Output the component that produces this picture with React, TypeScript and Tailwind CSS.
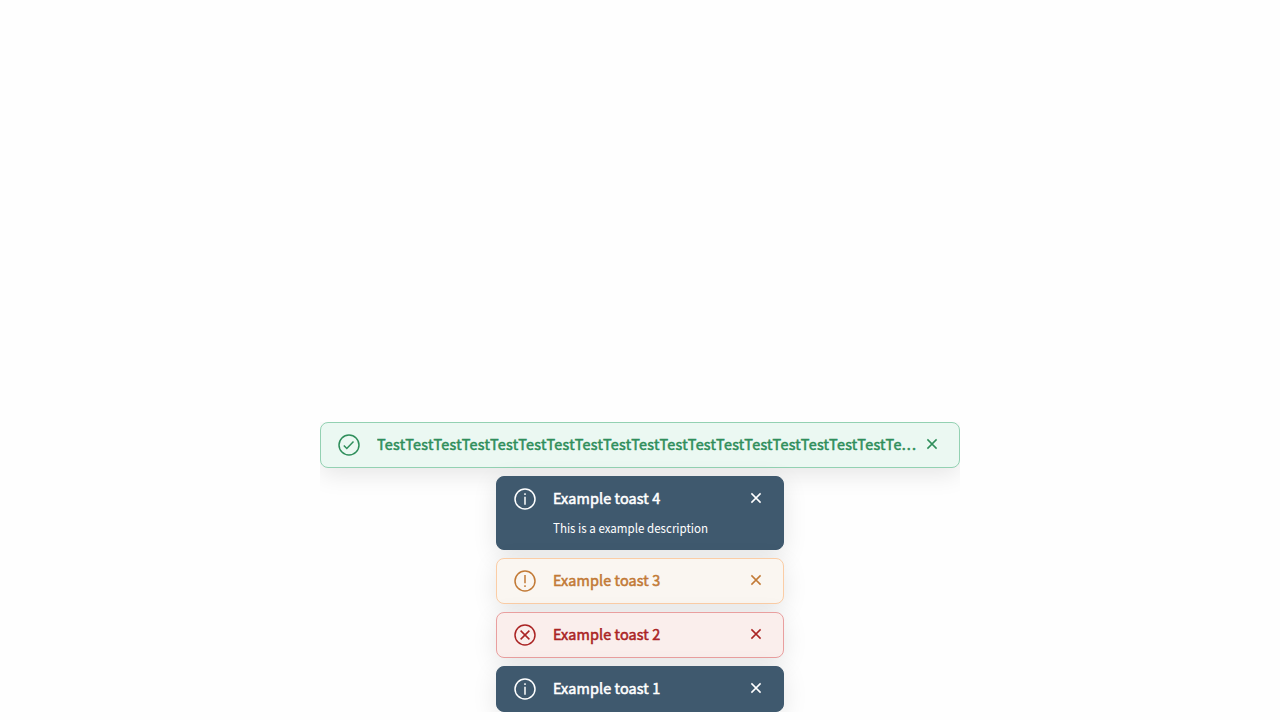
import type { ReactNode } from "react";

type Kind = "success" | "info" | "warning" | "error";

const tones: Record<Kind, string> = {
  success: "bg-[#ebf8f2] border-[#93d1b2] text-[#2f8e5b]",
  info: "bg-[#3f596e] border-[#3f596e] text-white",
  warning: "bg-[#faf6f1] border-[#fbcda6] text-[#c27a36]",
  error: "bg-[#faeeec] border-[#e99f9f] text-[#aa2424]",
};

const glyphs: Record<Kind, ReactNode> = {
  success: <path d="M6.8 12.5l3 3 6.7-6.9" />,
  info: (
    <>
      <path d="M12 9.8v8" />
      <path d="M12 6.3v1.7" />
    </>
  ),
  warning: (
    <>
      <path d="M12 6v8.2" />
      <path d="M12 16.2v1.7" />
    </>
  ),
  error: <path d="M7.6 7.6l8.8 8.8M16.4 7.6l-8.8 8.8" />,
};

type ToastProps = { kind: Kind; title: ReactNode; description?: string; wide?: boolean };

function Toast({ kind, title, description, wide }: ToastProps) {
  return (
    <div
      className={`${tones[kind]} ${wide ? "w-full" : "w-72"} flex shrink-0 items-start rounded-lg border pt-[10px] pb-[10px] pl-4 pr-[19px] shadow-[0_6px_24px_rgba(0,0,0,0.1)]`}
    >
      <svg className="size-6 shrink-0" viewBox="0 0 24 24" fill="none" stroke="currentColor" strokeWidth="1.5">
        <circle cx="12" cy="12" r="10" />
        {glyphs[kind]}
      </svg>
      <div className="ml-4 min-w-0 flex-1">
        <div
          className={`${wide ? "tracking-[0.275px]" : "tracking-[0.12px]"} h-6 overflow-hidden text-[14.4px] leading-[22px] font-normal whitespace-nowrap [-webkit-text-stroke:0.55px_currentColor]`}
        >
          {title}
        </div>
        {description && (
          <div className="mt-[7px] mb-px origin-left scale-x-[0.918] text-[12.6px] leading-5 whitespace-nowrap">
            {description}
          </div>
        )}
      </div>
      <svg className="mt-[3px] ml-[6px] size-4 shrink-0" viewBox="0 0 16 16" fill="none" stroke="currentColor" strokeWidth="1.5">
        <path d="M3.4 3.4l9.2 9.2M12.6 3.4l-9.2 9.2" />
      </svg>
    </div>
  );
}

export default function App() {
  return (
    <main className="flex h-[720px] flex-col items-center justify-end bg-[#fefefe] pb-2 font-['Source_Sans_Pro','Noto_Sans_CJK_SC',sans-serif]">
      <div className="flex w-[640px] flex-col items-center gap-2 overflow-hidden">
        <Toast
          kind="success"
          wide
          title={
            <>
              {"Test".repeat(18)}Te<span className="tracking-[1.2px]">...</span>
            </>
          }
        />
        <Toast kind="info" title="Example toast 4" description="This is a example description" />
        <Toast kind="warning" title="Example toast 3" />
        <Toast kind="error" title="Example toast 2" />
        <Toast kind="info" title="Example toast 1" />
      </div>
    </main>
  );
}
